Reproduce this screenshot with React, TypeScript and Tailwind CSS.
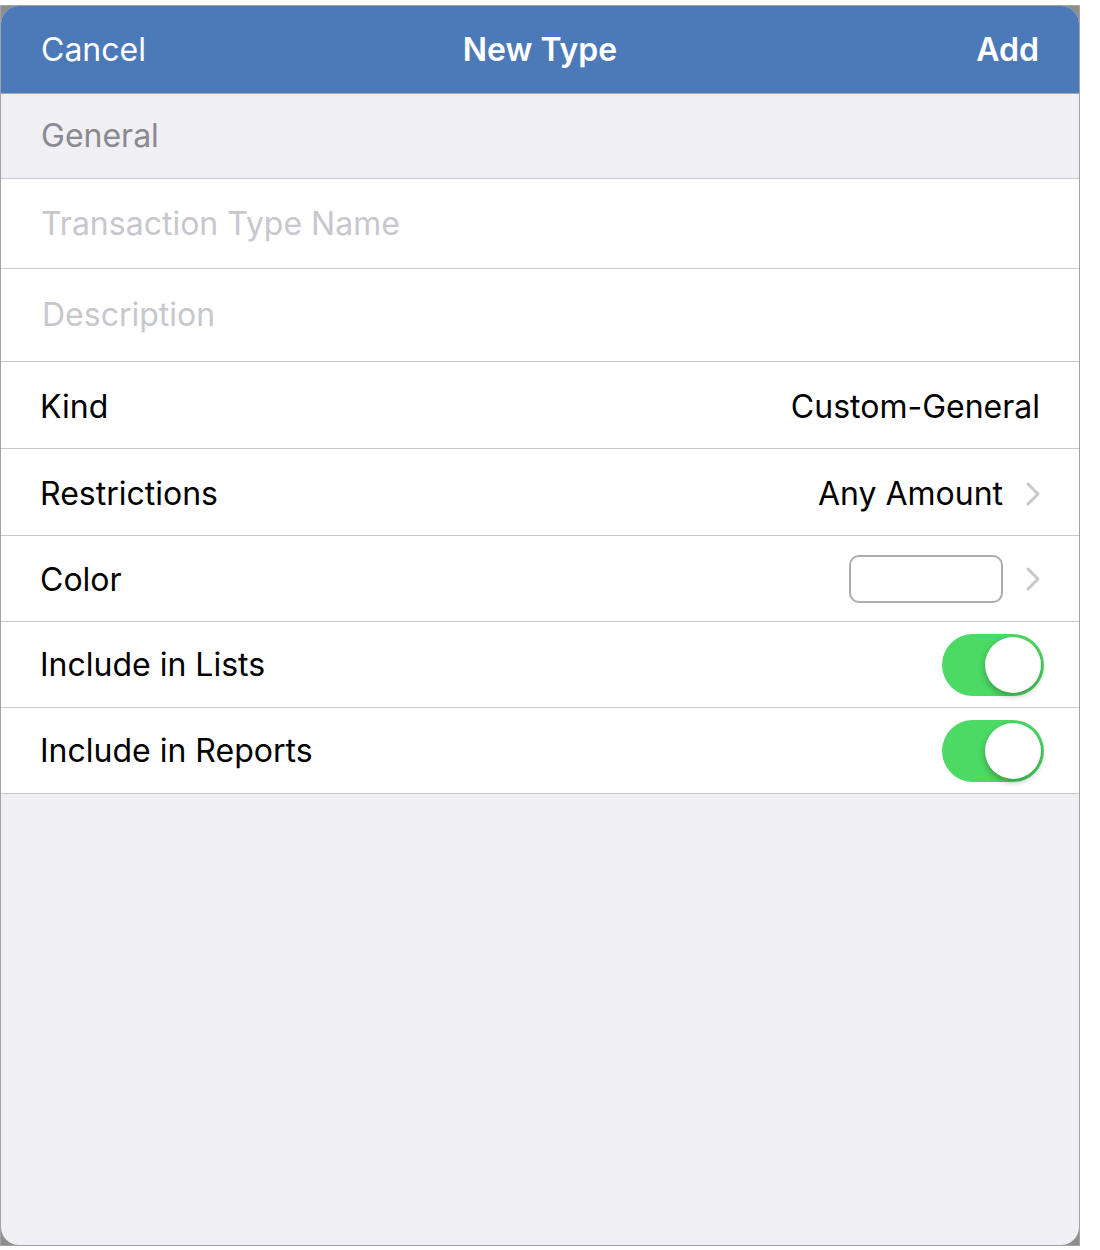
const Chevron = () => (
  <svg width="16" height="26" viewBox="0 0 16 26" className="ml-[22px] shrink-0">
    <path d="M3 3 L13 13 L3 23" fill="none" stroke="#c7c7cc" strokeWidth="3" strokeLinecap="round" strokeLinejoin="round" />
  </svg>
);

const Toggle = () => (
  <div className="w-[102px] h-[62px] rounded-full bg-[#4cd964] flex items-center justify-end pr-[3px]">
    <div className="w-[56px] h-[56px] rounded-full bg-white shadow-[0_3px_6px_rgba(0,0,0,0.3)]" />
  </div>
);

type RowProps = {
  label: string;
  h: string;
  pr?: string;
  children?: React.ReactNode;
};

const Row = ({ label, h, pr = "pr-[38px]", children }: RowProps) => (
  <div className={`${h} bg-white border-b border-[#c8c7cc] flex items-center justify-between pl-[39px] pt-[3px] ${pr}`}>
    <span className="text-black">{label}</span>
    {children}
  </div>
);

export default function App() {
  return (
    <div className="w-[1100px] h-[1250px] bg-white pt-[5px]" style={{ fontFamily: "Inter, 'Liberation Sans', sans-serif" }}>
      <div className="w-[1080px] h-[1241px] border border-[#a3a3a3] bg-[#8e8e8e]">
        <div className="h-full rounded-[18px] overflow-hidden bg-[#efeff4] text-[32px]">
          {/* nav bar */}
          <div className="h-[88px] bg-[#4c79b8] border-b border-[#a9a9ad] flex items-center justify-between px-[40px] text-white">
            <span className="w-[200px]">Cancel</span>
            <span className="font-semibold">New Type</span>
            <span className="w-[200px] text-right font-semibold">Add</span>
          </div>

          <div className="h-[85px] border-b border-[#c8c7cc] flex items-center pl-[40px] text-[#8a8a8f]">
            General
          </div>

          <div className="h-[90px] bg-white border-b border-[#c8c7cc] flex items-center pl-[40px] text-[#c7c7cd]">
            Transaction Type Name
          </div>
          <div className="h-[93px] bg-white border-b border-[#c8c7cc] flex items-center pl-[41px] text-[#c7c7cd]">
            Description
          </div>

          <Row label="Kind" h="h-[87px]" pr="pr-[39px]">
            <span className="text-black">Custom-General</span>
          </Row>
          <Row label="Restrictions" h="h-[87px]">
            <div className="flex items-center">
              <span className="text-black">Any Amount</span>
              <Chevron />
            </div>
          </Row>
          <Row label="Color" h="h-[86px]">
            <div className="flex items-center -mt-[3px]">
              <div className="w-[154px] h-[48px] rounded-[10px] border-2 border-[#adadad] bg-white" />
              <Chevron />
            </div>
          </Row>
          <div className="h-[86px] bg-white border-b border-[#c8c7cc] flex items-center justify-between pl-[39px] pr-[35px]">
            <span className="pt-[1px]">Include in Lists</span>
            <Toggle />
          </div>
          <div className="h-[86px] bg-white border-b border-[#c8c7cc] flex items-center justify-between pl-[39px] pr-[35px]">
            <span className="pt-[1px]">Include in Reports</span>
            <Toggle />
          </div>
        </div>
      </div>
    </div>
  );
}
